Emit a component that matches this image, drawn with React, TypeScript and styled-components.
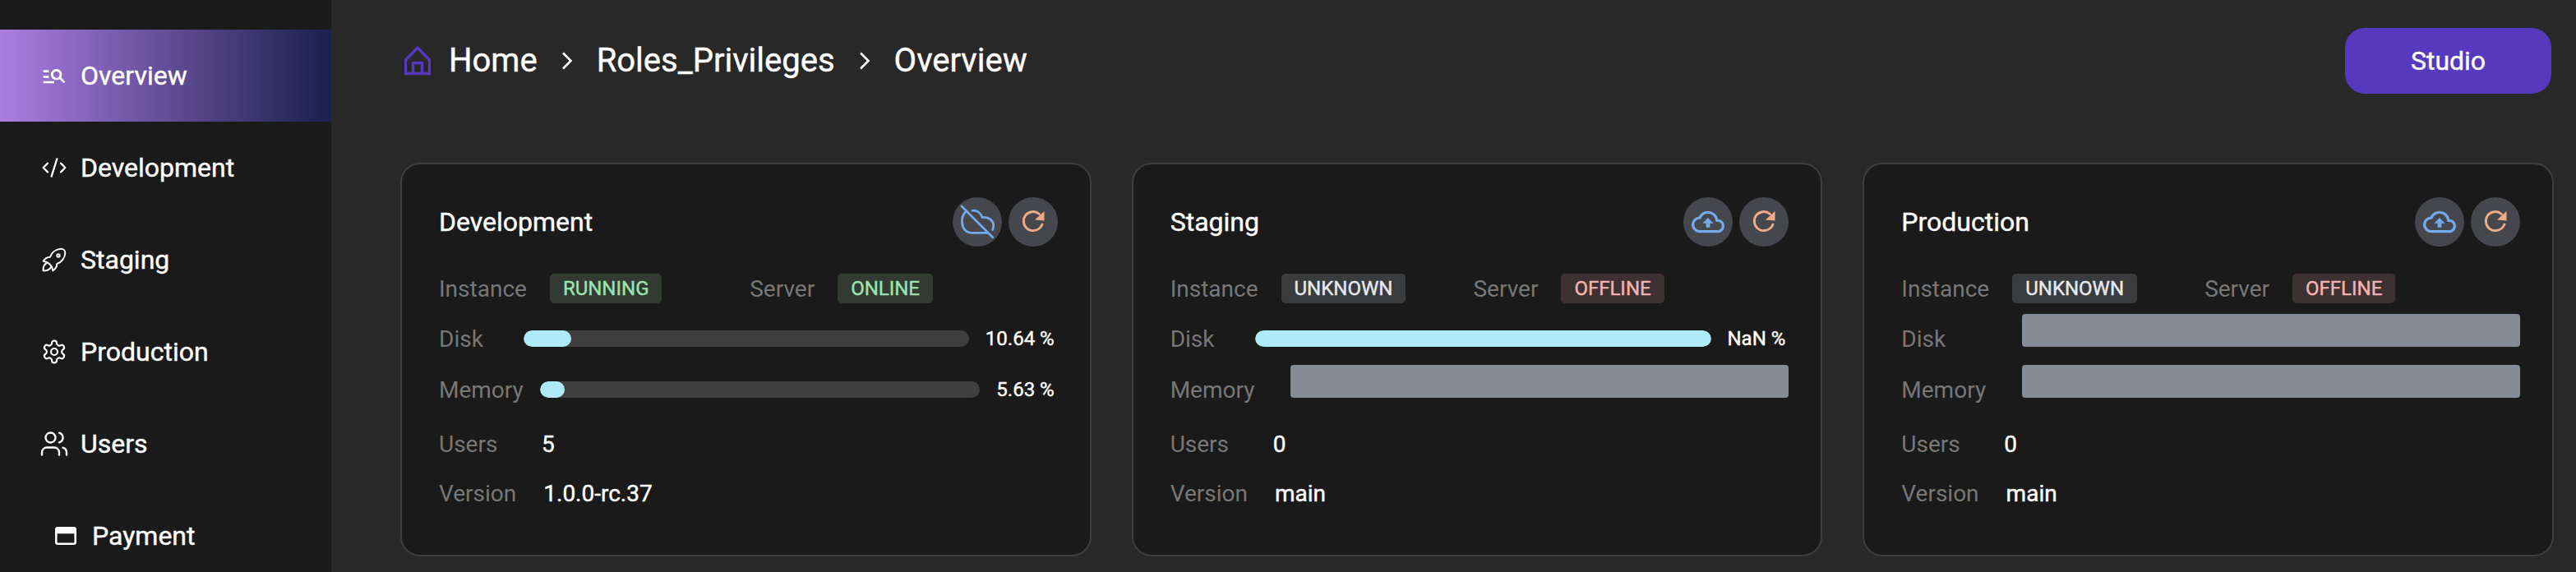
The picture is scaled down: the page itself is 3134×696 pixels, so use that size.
import { createGlobalStyle, css, styled } from 'styled-components';
import { MdManageSearch, MdOutlineCloudUpload } from 'react-icons/md';
import { LuCodeXml, LuSettings, LuUsers } from 'react-icons/lu';
import { TbRocket } from 'react-icons/tb';

type Tone = 'good' | 'neutral' | 'bad';

interface Env {
  name: string;
  instance: { label: string; tone: Tone };
  server: { label: string; tone: Tone };
  disk: { percent: number; text: string } | null;
  memory: { percent: number; text: string } | null;
  users: string;
  version: string;
  cloudOff?: boolean;
}

const envs: Env[] = [
  {
    name: 'Development',
    instance: { label: 'RUNNING', tone: 'good' },
    server: { label: 'ONLINE', tone: 'good' },
    disk: { percent: 10.64, text: '10.64 %' },
    memory: { percent: 5.63, text: '5.63 %' },
    users: '5',
    version: '1.0.0-rc.37',
    cloudOff: true,
  },
  {
    name: 'Staging',
    instance: { label: 'UNKNOWN', tone: 'neutral' },
    server: { label: 'OFFLINE', tone: 'bad' },
    disk: { percent: 100, text: 'NaN %' },
    memory: null,
    users: '0',
    version: 'main',
  },
  {
    name: 'Production',
    instance: { label: 'UNKNOWN', tone: 'neutral' },
    server: { label: 'OFFLINE', tone: 'bad' },
    disk: null,
    memory: null,
    users: '0',
    version: 'main',
  },
];

const HomeIcon = () => (
  <svg width="32" height="36" viewBox="0 0 32 36" fill="none" stroke="#553abf" strokeWidth="3.4" strokeLinejoin="round">
    <path d="M16 2 L30.5 17 V33.5 H1.5 V17 Z" />
    <path d="M10.5 33 V20.5 H21.5 V33" />
  </svg>
);

const Chevron = () => (
  <svg width="14" height="22" viewBox="0 0 14 22" fill="none" stroke="#fff" strokeWidth="2.6">
    <path d="M2 1.5 L11.5 11 L2 20.5" />
  </svg>
);

const CardIcon = () => (
  <svg width="26" height="22" viewBox="0 0 26 22" fill="none">
    <rect x="1.3" y="1.3" width="23.4" height="19.4" rx="2" stroke="#fff" strokeWidth="2.6" />
    <rect x="1.3" y="1.3" width="23.4" height="7" fill="#fff" />
  </svg>
);

const CloudOffIcon = () => (
  <svg width="60" height="60" viewBox="0 0 60 60" fill="none" stroke="#74a9ea" strokeWidth="2.8" strokeLinecap="round">
    <path d="M16.5 17 C12.5 21 11 25 11.5 30 C11.5 37.5 16 43.3 23 43.3 L42 43.3" />
    <path d="M24 16.3 C29.5 15.5 34 19 36 24.5 C43 23.5 50 28 49.7 35 C49.7 36.5 49.3 38 48.5 39.5" />
    <path d="M11 11 L48.7 48.7" />
  </svg>
);

const RestartIcon = () => (
  <svg width="60" height="60" viewBox="0 0 60 60" fill="none">
    <path
      d="M37.5 20.5 C34 17.5 30 17 27 18 C21 19.5 17.5 25 18.5 31 C19.5 37 25 41.5 31 40.5 C36 40 39.5 36.5 41 33"
      stroke="#efaa88"
      strokeWidth="2.9"
      strokeLinecap="round"
    />
    <path d="M43.5 17 V28.5 L32 27.5 Z" fill="#efaa88" />
  </svg>
);

const Progress = ({ percent, text }: { percent: number; text: string }) => (
  <>
    <Track>
      <Fill style={{ width: `${percent}%` }} />
    </Track>
    <Percent>{text}</Percent>
  </>
);

const EnvCard = ({ env }: { env: Env }) => (
  <Card>
    <CardHeader>
      <CardTitle>{env.name}</CardTitle>
      <CardActions>
        <RoundButton>{env.cloudOff ? <CloudOffIcon /> : <MdOutlineCloudUpload size={40} color="#74a9ea" />}</RoundButton>
        <RoundButton>
          <RestartIcon />
        </RoundButton>
      </CardActions>
    </CardHeader>

    <StatusRow>
      <StatusGroup>
        <Label>Instance</Label>
        <Badge $tone={env.instance.tone}>{env.instance.label}</Badge>
      </StatusGroup>
      <StatusGroup>
        <Label>Server</Label>
        <Badge $tone={env.server.tone}>{env.server.label}</Badge>
      </StatusGroup>
    </StatusRow>

    <Usage>
      <UsageRow>
        <UsageLabel>Disk</UsageLabel>
        {env.disk ? <Progress {...env.disk} /> : <Skeleton />}
      </UsageRow>
      <UsageRow>
        <UsageLabel>Memory</UsageLabel>
        {env.memory ? <Progress {...env.memory} /> : <Skeleton />}
      </UsageRow>
    </Usage>

    <InfoRows>
      <InfoRow>
        <InfoLabel>Users</InfoLabel>
        <Value>{env.users}</Value>
      </InfoRow>
      <InfoRow>
        <InfoLabel>Version</InfoLabel>
        <Value>{env.version}</Value>
      </InfoRow>
    </InfoRows>
  </Card>
);

export default function App() {
  return (
    <>
      <GlobalStyle />
      <Page>
        <Sidebar>
          <NavItem $active>
            <NavIcon>
              <MdManageSearch size={32} />
            </NavIcon>
            Overview
          </NavItem>
          <NavItem>
            <NavIcon>
              <LuCodeXml size={32} strokeWidth={1.7} />
            </NavIcon>
            Development
          </NavItem>
          <NavItem>
            <NavIcon>
              <TbRocket size={40} strokeWidth={1.2} />
            </NavIcon>
            Staging
          </NavItem>
          <NavItem>
            <NavIcon>
              <LuSettings size={32} strokeWidth={1.6} />
            </NavIcon>
            Production
          </NavItem>
          <NavItem>
            <NavIcon>
              <LuUsers size={36} strokeWidth={1.6} />
            </NavIcon>
            Users
          </NavItem>
          <NavItem $nested>
            <NavIcon>
              <CardIcon />
            </NavIcon>
            Payment
          </NavItem>
        </Sidebar>

        <Main>
          <Header>
            <Breadcrumb>
              <HomeIcon />
              <Crumb>Home</Crumb>
              <Chevron />
              <Crumb>Roles_Privileges</Crumb>
              <Chevron />
              <Crumb>Overview</Crumb>
            </Breadcrumb>
            <StudioButton>Studio</StudioButton>
          </Header>

          <CardGrid>
            {envs.map((env) => (
              <EnvCard key={env.name} env={env} />
            ))}
          </CardGrid>
        </Main>
      </Page>
    </>
  );
}

// the regular face renders a little thin next to the original
const heavier = css`
  -webkit-text-stroke: 0.4px currentColor;
`;

const GlobalStyle = createGlobalStyle`
  html, body {
    margin: 0;
    height: 696px;
    overflow: hidden;
    background: #282828;
    font-family: Roboto, "Liberation Sans", sans-serif;
    color: #fff;
  }
  * {
    box-sizing: border-box;
  }
`;

const Page = styled.div`
  display: flex;
  width: 3134px;
  height: 696px;
  overflow: hidden;
`;

const Sidebar = styled.nav`
  flex: 0 0 403px;
  padding-top: 36px;
  background: #1a1a1a;
`;

const NavItem = styled.div<{ $active?: boolean; $nested?: boolean }>`
  display: flex;
  align-items: center;
  height: 112px;
  padding-left: ${(p) => (p.$nested ? '64px' : '50px')};
  gap: 16px;
  font-size: 32px;
  ${heavier}
  background: ${(p) => (p.$active ? 'linear-gradient(90deg, #ac7de3 0%, #1a1f4b 100%)' : 'transparent')};
`;

const NavIcon = styled.span`
  display: flex;
  flex: 0 0 32px;
  min-width: 0;
  align-items: center;
  justify-content: center;
  height: 32px;
  -webkit-text-stroke: 0;
  & > svg {
    flex-shrink: 0;
  }
`;

const Main = styled.main`
  flex: 1;
  padding: 34px 27px 0 84px;
`;

const Header = styled.header`
  display: flex;
  align-items: center;
  justify-content: space-between;
  height: 80px;
  padding: 0 3px 0 5px;
`;

const Breadcrumb = styled.div`
  display: flex;
  align-items: center;
  gap: 29px;
  & > svg:first-child {
    margin-right: -7px;
  }
`;

const Crumb = styled.span`
  font-size: 40px;
  line-height: 48px;
  ${heavier}
`;

const StudioButton = styled.button`
  width: 251px;
  height: 80px;
  border: 0;
  border-radius: 24px;
  background: #553abf;
  color: #fff;
  font-family: inherit;
  font-size: 32px;
  ${heavier}
`;

const CardGrid = styled.div`
  display: grid;
  grid-template-columns: repeat(3, 1fr);
  gap: 49px;
  margin-top: 84px;
`;

const Card = styled.section`
  height: 479px;
  padding: 40px 39px 0 45px;
  border: 2px solid #3e3e3e;
  border-radius: 24px;
  background: #1a1a1a;
`;

const CardHeader = styled.div`
  display: flex;
  align-items: center;
  justify-content: space-between;
  height: 60px;
`;

const CardTitle = styled.h2`
  margin: 0;
  font-size: 32px;
  font-weight: 400;
  ${heavier}
`;

const CardActions = styled.div`
  display: flex;
  gap: 8px;
`;

const RoundButton = styled.div`
  display: flex;
  align-items: center;
  justify-content: center;
  width: 60px;
  height: 60px;
  border-radius: 50%;
  background: #45474c;
`;

const StatusRow = styled.div`
  display: flex;
  justify-content: space-between;
  align-items: center;
  width: 601px;
  height: 36px;
  margin-top: 33px;
`;

const StatusGroup = styled.div`
  display: flex;
  align-items: center;
  gap: 28px;
`;

const Label = styled.span`
  font-size: 28px;
  color: #777;
`;

const badgeTones: Record<Tone, { bg: string; fg: string }> = {
  good: { bg: '#323a32', fg: '#9be3b0' },
  neutral: { bg: '#3a3b3d', fg: '#e6eaf0' },
  bad: { bg: '#3e3131', fg: '#f3b3b3' },
};

const Badge = styled.span<{ $tone: Tone }>`
  display: inline-flex;
  align-items: center;
  height: 36px;
  padding: 0 16px;
  border-radius: 5px;
  font-size: 24px;
  ${heavier}
  background: ${(p) => badgeTones[p.$tone].bg};
  color: ${(p) => badgeTones[p.$tone].fg};
`;

const Usage = styled.div`
  margin-top: 12px;
`;

const UsageRow = styled.div`
  display: flex;
  align-items: center;
  gap: 20px;
  height: 62px;
`;

const UsageLabel = styled(Label)`
  min-width: 83px;
`;

const Track = styled.div`
  flex: 1;
  height: 20px;
  border-radius: 10px;
  background: #3f3f3f;
  overflow: hidden;
`;

const Fill = styled.div`
  height: 100%;
  border-radius: 10px;
  background: #aeeaf8;
`;

const Percent = styled.span`
  margin-right: 4px;
  font-size: 24px;
  white-space: nowrap;
  ${heavier}
`;

const Skeleton = styled.div`
  flex: 0 0 606px;
  align-self: flex-start;
  height: 40px;
  margin: 1px 0 0 auto;
  border-radius: 4px;
  background: #858c96;
`;

const InfoRows = styled.div`
  margin-top: 5px;
`;

const InfoRow = styled.div`
  display: flex;
  align-items: center;
  gap: 33px;
  height: 60px;
`;

const InfoLabel = styled(Label)`
  min-width: 92px;
`;

const Value = styled.span`
  font-size: 28px;
  ${heavier}
`;
